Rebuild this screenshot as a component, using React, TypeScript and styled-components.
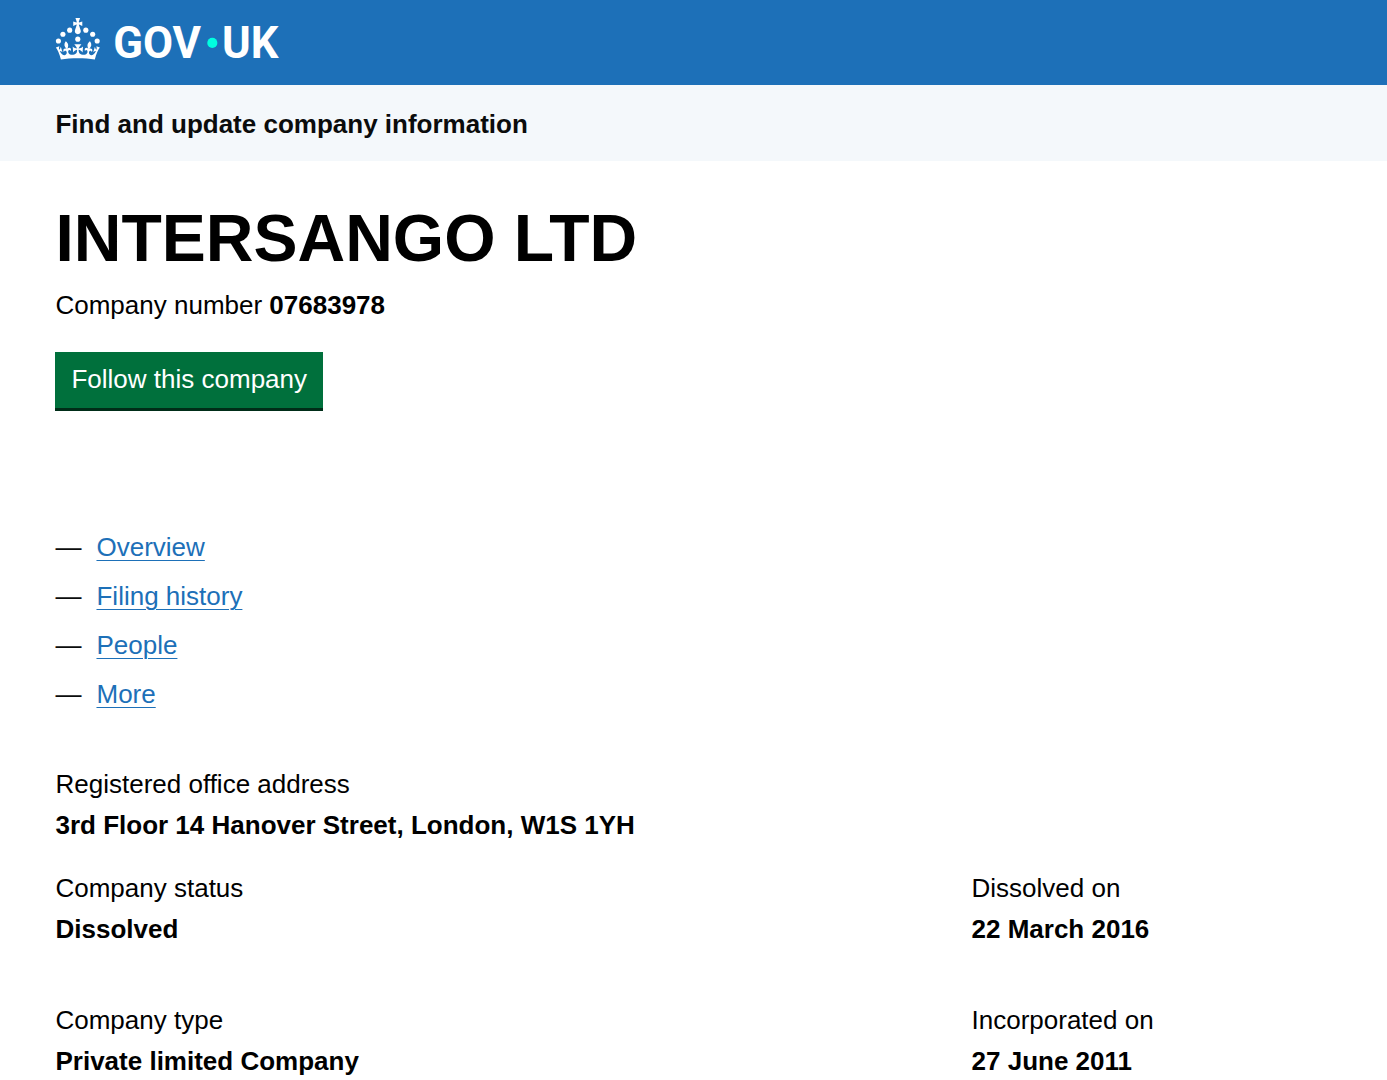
import React from "react";
import styled, { createGlobalStyle } from "styled-components";

const GlobalStyle = createGlobalStyle`
  *, *::before, *::after { box-sizing: border-box; }
  body {
    margin: 0;
    background: #fff;
    color: #000;
    font-family: "Liberation Sans", Arial, sans-serif;
    font-size: 26px;
    line-height: 35px;
  }
`;

const gutter = "4%";

const Header = styled.header`
  padding: 18px ${gutter} 13px;
  background: #1d70b8;
  color: #fff;
`;

const HomeLink = styled.a`
  display: flex;
  width: fit-content;
  color: inherit;
`;

const Logo = styled.svg`
  display: block;
  width: 226px;
  height: 54px;
  fill: currentColor;
  overflow: visible;
`;

const Wordmark = styled.text`
  font-family: Roboto, "Liberation Sans", sans-serif;
  font-size: 63px;
  font-weight: 700;
`;

const ServiceBar = styled.div`
  padding: 22px ${gutter} 19px;
  background: #f4f8fb;
`;

const ServiceLink = styled.a`
  display: block;
  width: fit-content;
  color: #0b0c0c;
  font-weight: 700;
  text-decoration: none;
`;

const Main = styled.main`
  padding: 43px ${gutter} 0;
`;

const CompanyName = styled.h1`
  margin: 0 0 15px;
  font-size: 66px;
  line-height: 69px;
  font-weight: 700;
`;

const CompanyNumber = styled.p`
  margin: 0 0 29px;
`;

const FollowButton = styled.button`
  display: block;
  padding: 10px 16px 11px;
  border: 0;
  border-radius: 0;
  background: #00703c;
  box-shadow: 0 3px 0 #002d18;
  color: #fff;
  font: inherit;
  cursor: pointer;
`;

const TabList = styled.ul`
  display: grid;
  gap: 14px;
  margin: 122px 0 55px;
  padding: 0;
  list-style: none;
`;

const TabItem = styled.li`
  display: flex;
  gap: 15px;
  color: #0b0c0c;

  &::before {
    content: "—";
  }
`;

const TabLink = styled.a`
  color: #1d70b8;
  text-decoration: underline;
  text-decoration-thickness: 1px;
  text-underline-offset: 4px;
`;

const Details = styled.dl`
  display: grid;
  gap: 6px;
  margin: 0;
`;

const DetailRow = styled.dl<{ $gap: number }>`
  display: grid;
  grid-template-columns: minmax(0, 1fr) 360px;
  margin: ${(p) => p.$gap}px 0 0;
`;

const Detail = styled.div`
  display: grid;
  gap: 6px;
`;

const Value = styled.dd`
  margin: 0;
  font-weight: 700;
`;

const tabs = ["Overview", "Filing history", "People", "More"];

const rows = [
  {
    gap: 28,
    items: [
      ["Company status", "Dissolved"],
      ["Dissolved on", "22 March 2016"],
    ],
  },
  {
    gap: 56,
    items: [
      ["Company type", "Private limited Company"],
      ["Incorporated on", "27 June 2011"],
    ],
  },
];

function GovLogo() {
  return (
    <Logo viewBox="0 0 324 78" role="img" aria-label="GOV.UK">
      <circle cx="20" cy="17.6" r="3.7" />
      <circle cx="10.2" cy="23.5" r="3.7" />
      <circle cx="3.7" cy="33.2" r="3.7" />
      <circle cx="31.7" cy="30.6" r="3.7" />
      <circle cx="43.3" cy="17.6" r="3.7" />
      <circle cx="53.2" cy="23.5" r="3.7" />
      <circle cx="59.7" cy="33.2" r="3.7" />
      <path d="M33.1,9.8c.2-.1.3-.3.5-.5l4.6,2.4v-6.8l-4.6,1.5c-.1-.2-.3-.3-.5-.5l1.9-5.9h-6.7l1.9,5.9c-.2.1-.3.3-.5.5l-4.6-1.5v6.8l4.6-2.4c.1.2.3.3.5.5l-2.6,8c-.9,2.8,1.2,5.7,4.1,5.7h0c3,0,5.1-2.9,4.1-5.7l-2.6-8ZM37,37.9s-3.4,3.8-4.1,6.1c2.2,0,4.2-.5,6.4-2.8l-.7,8.5c-2-2.8-4.4-4.1-5.7-3.8.1,3.1.5,6.7,5.8,7.2,3.7.3,6.7-1.5,7-3.8.4-2.6-2-4.3-3.7-1.6-1.4-4.5,2.4-6.1,4.9-3.2-1.9-4.5-1.8-7.7,2.4-10.9,3,4,2.6,7.3-1.2,11.1,2.4-1.3,6.2,0,4,4.6-1.2-2.8-3.7-2.2-4.2.2-.3,1.7.7,3.7,3,4.2,1.9.3,4.7-.9,7-5.9-1.3,0-2.4.7-3.9,1.7l2.4-8c.6,2.3,1.4,3.7,2.2,4.5.6-1.6.5-2.8,0-5.3l5,1.8c-2.6,3.6-5.2,8.7-7.3,17.5-7.4-1.1-15.7-1.7-24.5-1.7h0c-8.8,0-17.1.6-24.5,1.7-2.1-8.9-4.7-13.9-7.3-17.5l5-1.8c-.5,2.5-.6,3.7,0,5.3.8-.8,1.6-2.3,2.2-4.5l2.4,8c-1.5-1-2.6-1.7-3.9-1.7,2.3,5,5.2,6.2,7,5.9,2.3-.4,3.3-2.4,3-4.2-.5-2.4-3-3.1-4.2-.2-2.2-4.6,1.6-6,4-4.6-3.7-3.7-4.2-7.1-1.2-11.1,4.2,3.2,4.3,6.4,2.4,10.9,2.5-2.8,6.3-1.3,4.9,3.2-1.8-2.7-4.1-1-3.7,1.6.3,2.3,3.3,4.1,7,3.8,5.4-.5,5.7-4.2,5.8-7.2-1.3-.2-3.7,1-5.7,3.8l-.7-8.5c2.2,2.3,4.2,2.7,6.4,2.8-.7-2.3-4.1-6.1-4.1-6.1h10.6,0Z" />
      <Wordmark x="83" y="58">GOV</Wordmark>
      <circle cx="226" cy="36" r="7.3" fill="#00ffe0" />
      <Wordmark x="240" y="58">UK</Wordmark>
    </Logo>
  );
}

export default function App() {
  return (
    <>
      <GlobalStyle />
      <Header>
        <HomeLink href="#home">
          <GovLogo />
        </HomeLink>
      </Header>
      <ServiceBar>
        <ServiceLink href="#service">Find and update company information</ServiceLink>
      </ServiceBar>
      <Main>
        <CompanyName>INTERSANGO LTD</CompanyName>
        <CompanyNumber>
          Company number <strong>07683978</strong>
        </CompanyNumber>
        <FollowButton type="button">Follow this company</FollowButton>
        <nav aria-label="Company sections">
          <TabList>
            {tabs.map((tab) => (
              <TabItem key={tab}>
                <TabLink href="#section">{tab}</TabLink>
              </TabItem>
            ))}
          </TabList>
        </nav>
        <Details>
          <dt>Registered office address</dt>
          <Value>3rd Floor 14 Hanover Street, London, W1S 1YH</Value>
        </Details>
        {rows.map((row) => (
          <DetailRow key={row.items[0][0]} $gap={row.gap}>
            {row.items.map(([term, value]) => (
              <Detail key={term}>
                <dt>{term}</dt>
                <Value>{value}</Value>
              </Detail>
            ))}
          </DetailRow>
        ))}
      </Main>
    </>
  );
}
